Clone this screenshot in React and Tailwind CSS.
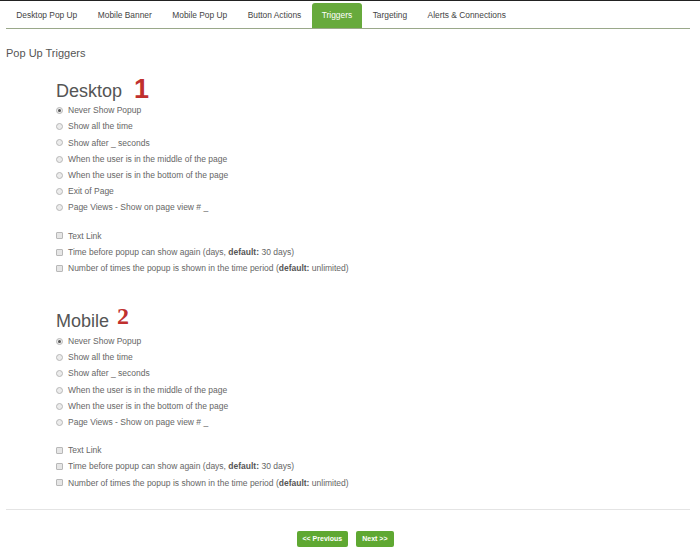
import React from 'react';

const tabs = ['Desktop Pop Up', 'Mobile Banner', 'Mobile Pop Up', 'Button Actions', 'Triggers', 'Targeting', 'Alerts & Connections'];

const desktopRadios = [
  'Never Show Popup',
  'Show all the time',
  'Show after _ seconds',
  'When the user is in the middle of the page',
  'When the user is in the bottom of the page',
  'Exit of Page',
  'Page Views - Show on page view # _',
];

const mobileRadios = desktopRadios.filter((r) => r !== 'Exit of Page');

const Radio = ({ checked }) => (
  <span className="w-[7px] h-[7px] rounded-full border border-[#b8b8b8] bg-[#ececec] flex items-center justify-center shrink-0">
    {checked && <span className="w-[3px] h-[3px] rounded-full bg-[#555]" />}
  </span>
);

const Box = () => <span className="w-[7px] h-[7px] border border-[#b8b8b8] bg-[#e6e6e6] rounded-[1px] shrink-0" />;

const Row = ({ children, icon }) => (
  <div className="h-[16.2px] flex items-center gap-[5px] text-[8.5px] text-[#666]">
    {icon}
    <span>{children}</span>
  </div>
);

const Checks = () => (
  <div className="mt-[12px]">
    <Row icon={<Box />}>Text Link</Row>
    <Row icon={<Box />}>
      Time before popup can show again (days, <b className="text-[#555]">default:</b> 30 days)
    </Row>
    <Row icon={<Box />}>
      Number of times the popup is shown in the time period (<b className="text-[#555]">default:</b> unlimited)
    </Row>
  </div>
);

const Section = ({ title, num, numClass, radios }) => (
  <div className="pl-[56px]">
    <div className="flex items-end h-[28px]">
      <h2 className="text-[18px] text-[#555] leading-none">{title}</h2>
      <span className={numClass}>{num}</span>
    </div>
    <div className="mt-[3px]">
      {radios.map((r, i) => (
        <Row key={r} icon={<Radio checked={i === 0} />}>{r}</Row>
      ))}
    </div>
    <Checks />
  </div>
);

export default function App() {
  return (
    <div className="w-[700px] h-[558px] bg-white border-t border-[#222] font-['Liberation_Sans',Arial,sans-serif] overflow-hidden">
      <nav className="mx-[6px] mr-[10px] mt-[2px] flex border-b border-[#9aa88a] h-[26px] items-end">
        {tabs.map((t) => (
          <div
            key={t}
            className={
              t === 'Triggers'
                ? 'h-[25px] px-[10.25px] flex items-center text-[8.4px] text-white bg-[#67aa3c] rounded-t-[3px]'
                : 'h-[25px] px-[10.25px] flex items-center text-[8.4px] text-[#444]'
            }
          >
            {t}
          </div>
        ))}
      </nav>

      <h1 className="ml-[6px] mt-[16px] text-[11px] text-[#555]">Pop Up Triggers</h1>

      <div className="mt-[10px]">
        <Section
          title="Desktop"
          num="1"
          numClass="ml-[12px] text-[27px] leading-none font-bold text-[#c0302e] font-['Liberation_Sans',Arial,sans-serif] mb-[-3px]"
          radios={desktopRadios}
        />
      </div>

      <div className="mt-[26px]">
        <Section
          title="Mobile"
          num="2"
          numClass="ml-[8px] text-[24px] leading-none font-bold text-[#c0302e] font-['Liberation_Serif',serif] mb-[2px]"
          radios={mobileRadios}
        />
      </div>

      <div className="mx-[6px] mr-[10px] mt-[18px] border-t border-[#e4e4e4]" />

      <div className="flex justify-center gap-[8px] mt-[21px] pr-[10px]">
        <button className="h-[16px] px-[6px] bg-[#5fa832] text-white text-[7px] font-bold rounded-[2px]">&lt;&lt; Previous</button>
        <button className="h-[16px] px-[6px] bg-[#5fa832] text-white text-[7px] font-bold rounded-[2px]">Next &gt;&gt;</button>
      </div>
    </div>
  );
}
